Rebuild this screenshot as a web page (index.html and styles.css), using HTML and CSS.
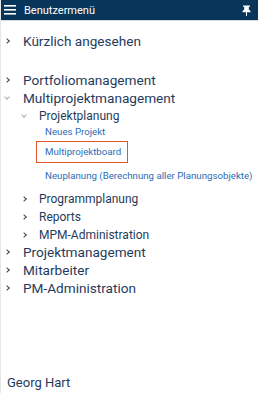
FILE: index.html
```html
<!DOCTYPE html>
<html lang="de">
<head>
  <meta charset="UTF-8">
  <title>Benutzermenü</title>
  <link rel="stylesheet" href="styles.css">
</head>
<body>
  <div class="panel">
    <div class="header">
      <svg class="burger" width="12" height="10" viewBox="0 0 12 10">
        <rect x="0" y="0" width="12" height="1.6" fill="#fff"/>
        <rect x="0" y="4" width="12" height="1.6" fill="#fff"/>
        <rect x="0" y="8" width="12" height="1.6" fill="#fff"/>
      </svg>
      <span class="title">Benutzermenü</span>
      <svg class="pin" width="9" height="11" viewBox="0 0 9 11">
        <path d="M1 0.5h7v1.2h-1.2v2.8l1.7 1.6v1.2h-8v-1.2l1.7-1.6v-2.8h-1.2z" fill="#fff"/>
        <rect x="4" y="7" width="1" height="4" fill="#fff"/>
      </svg>
    </div>

    <ul class="menu">
      <li class="top closed recent">Kürzlich angesehen</li>
      <li class="top closed first">Portfoliomanagement</li>
      <li class="top open">Multiprojektmanagement</li>
      <li class="sub open">Projektplanung</li>
      <li class="leaf">Neues Projekt</li>
      <li class="leaf active"><span>Multiprojektboard</span></li>
      <li class="leaf">Neuplanung (Berechnung aller Planungsobjekte)</li>
      <li class="sub closed gap">Programmplanung</li>
      <li class="sub closed">Reports</li>
      <li class="sub closed">MPM-Administration</li>
      <li class="top closed back">Projektmanagement</li>
      <li class="top closed">Mitarbeiter</li>
      <li class="top closed">PM-Administration</li>
    </ul>

    <div class="user">Georg Hart</div>
  </div>
</body>
</html>
```

FILE: styles.css
```css
html, body {
  margin: 0;
  padding: 0;
  height: 100%;
}
body {
  font-family: Roboto, "Liberation Sans", sans-serif;
  background: #fff;
  color: #1f3b5c;
}
.panel {
  display: flex;
  flex-direction: column;
  height: 393px;
  border-left: 1px solid #e6e6e6;
  box-sizing: border-box;
}
.header {
  display: flex;
  align-items: center;
  height: 20px;
  background: #07365a;
  border-bottom: 1px solid #d8dde3;
  padding: 0 7px 0 3px;
}
.burger {
  margin-right: 8px;
}
.title {
  color: #fff;
  font-size: 11px;
  flex: 1;
}
.menu {
  list-style: none;
  margin: 0;
  padding: 0;
}
.menu li {
  position: relative;
  white-space: nowrap;
}
.menu li.closed::before,
.menu li.open::before {
  content: "";
  position: absolute;
  top: 50%;
  width: 3px;
  height: 3px;
  border-right: 1.5px solid #444;
  border-bottom: 1.5px solid #444;
}
.menu li.closed::before {
  transform: translateY(-50%) rotate(-45deg);
}
.menu li.open::before {
  border-color: #aaa;
  border-width: 1px;
  transform: translateY(-75%) rotate(45deg);
}
.top {
  font-size: 13.6px;
  line-height: 18px;
  padding-left: 22px;
}
.top::before {
  left: 4px;
}
.recent {
  margin-top: 11px;
}
.first {
  margin-top: 21px;
}
.back {
  margin-top: -1px;
}
.sub {
  font-size: 12px;
  line-height: 18px;
  padding-left: 38px;
}
.sub::before {
  left: 21px;
}
.gap {
  margin-top: 7px;
}
.leaf {
  font-size: 9.7px;
  line-height: 14px;
  padding-left: 44px;
  color: #2c6cb5;
}
.leaf.active {
  margin: 2px 0 6px;
  padding-left: 35px;
}
.leaf.active span {
  display: inline-block;
  border: 1.5px solid #e4532c;
  padding: 3px 6px 3px 8px;
}
.user {
  margin-top: auto;
  padding: 0 0 1px 6px;
  font-size: 13px;
  line-height: 18px;
}
```
